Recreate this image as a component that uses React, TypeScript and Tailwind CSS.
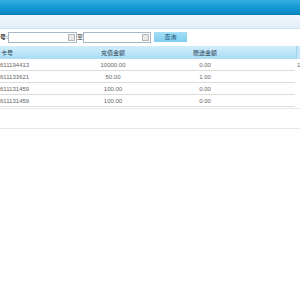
export default function App() {
  const rows = [
    { no: '611194413', amt: '10000.00', gift: '0.00', x: '1' },
    { no: '611133621', amt: '50.00', gift: '1.00', x: '' },
    { no: '611131459', amt: '100.00', gift: '0.00', x: '' },
    { no: '611131459', amt: '100.00', gift: '0.00', x: '' },
  ]

  const font = { fontFamily: '"Liberation Sans", "Noto Sans CJK SC", sans-serif' }

  return (
    <div className="w-[300px] h-[300px] overflow-hidden bg-white text-[6px] leading-none" style={font}>
      {/* top bar */}
      <div className="h-[15px] bg-gradient-to-b from-[#35aee2] via-[#149ad4] to-[#0b88c4] border-b border-[#0a7cb4]" />

      {/* light band */}
      <div className="h-[14px] bg-gradient-to-b from-[#f0f7fd] to-[#e2eef9] border-b border-[#cde2f1]" />

      {/* search row */}
      <div className="flex items-center h-[12px] mt-[2px] text-[#333]">
        <span className="shrink-0 w-[8px] whitespace-nowrap font-bold">号:</span>
        <div className="flex items-center shrink-0 w-[69px] h-[11px] border border-[#aab8c6] bg-white">
          <div className="flex-1" />
          <div className="w-[7px] h-[7px] mr-[1px] border border-[#b8b8b8] bg-[#e8e8e8]" />
        </div>
        <span className="shrink-0 w-[6px] text-center">至</span>
        <div className="flex items-center shrink-0 w-[68px] h-[11px] border border-[#aab8c6] bg-white">
          <div className="flex-1" />
          <div className="w-[7px] h-[7px] mr-[1px] border border-[#b8b8b8] bg-[#e8e8e8]" />
        </div>
        <div className="shrink-0 ml-[3px] w-[33px] h-[10px] flex items-center justify-center bg-gradient-to-b from-[#a3def6] to-[#7fcfee] text-[#1d4f78]">
          查询
        </div>
      </div>

      {/* table */}
      <div className="mt-[3px] w-[300px]">
        <div className="flex h-[13px] items-center bg-gradient-to-b from-[#d2eefb] to-[#a8dcf4] text-[#2b3d55]">
          <div className="w-[67px] pl-[1px]">卡号</div>
          <div className="w-[92px] text-center">充值金额</div>
          <div className="w-[92px] text-center">赠送金额</div>
          <div className="w-[45px]" />
          <div className="w-[4px] h-full bg-[#c4e6f6] border-l border-[#9fd2ea]" />
        </div>
        {rows.map((r, i) => (
          <div key={i} className="flex h-[12px] items-center text-[#666]">
            <div className="flex w-[295px] h-full items-center border-b border-[#dcdcdc]">
              <div className="w-[67px]">{r.no}</div>
              <div className="w-[92px] text-center">{r.amt}</div>
              <div className="w-[92px] text-center">{r.gift}</div>
              <div className="w-[44px]" />
            </div>
            <div className="w-[5px] h-full pl-[2px]">
              <span className="block pt-[3px]">{r.x}</span>
            </div>
          </div>
        ))}
        <div className="mt-[1px] h-[21px] border-t border-b border-[#e6e6e6]" />
      </div>
    </div>
  )
}
